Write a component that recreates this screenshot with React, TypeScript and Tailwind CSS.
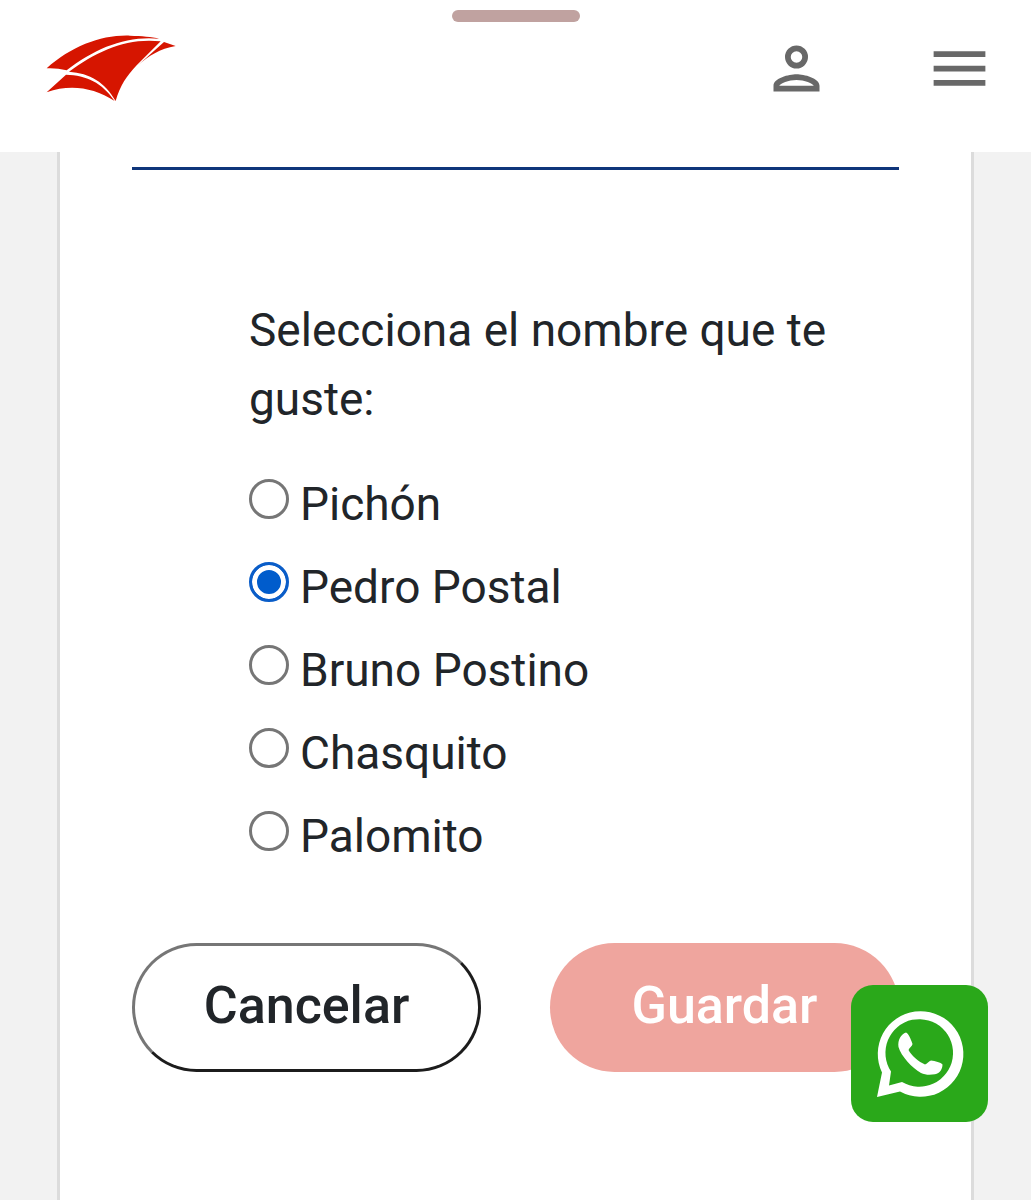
import { useState } from 'react';

const names = ['Pichón', 'Pedro Postal', 'Bruno Postino', 'Chasquito', 'Palomito'];

function Logo() {
  return (
    <svg viewBox="45 40 396 204" className="w-[132px] h-[68px]" fill="#d61500" aria-hidden="true">
      <path d="M50 143C125 76 215 42 300 45C335 46 365 48 388 54C290 44 195 82 110 149C90 144 70 142 50 143Z" />
      <path d="M117 153C200 92 290 50 392 62L320 134C290 166 270 195 257 241C225 184 180 158 117 153Z" />
      <path d="M402 64L437 76C390 84 355 106 324 134Z" />
      <path d="M108 162C170 164 215 185 254 241C190 200 120 190 50 215Z" />
    </svg>
  );
}

function WhatsAppIcon() {
  return (
    <svg viewBox="0 0 137 137" className="w-full h-full" fill="#fff" aria-hidden="true">
      <path
        fillRule="evenodd"
        d="M26 112L31 87.500A42.800 42.800 0 1 1 49 106.500ZM38 100.500L40 86.500A33.800 33.800 0 1 1 51 97Z"
      />
      <path d="M55 47.500C57 48 60 54 61.500 59C61.500 61 58 63 57.500 65C60 70 68 77 74 79.500C76 79 78 76 80 75.500C84 76 90 77.500 91.500 79.500C91.500 84 89 88.500 84 89.300C79 90 74 90 70 88C61 83 50 71 47.500 62C46.500 55 50 49 55 47.500Z" />
    </svg>
  );
}

export default function App() {
  const [selected, setSelected] = useState('Pedro Postal');

  return (
    <div className="min-h-screen flex flex-col bg-[#f2f2f2] text-[#212529] font-[Roboto,sans-serif]">
      {/* Header */}
      <header className="relative bg-white h-[152px] flex items-start justify-between pl-[45px] pr-[37px] pt-[34px]">
        <div className="absolute top-[10px] left-1/2 -translate-x-1/2 w-32 h-3 rounded-full bg-[#c0a2a0]" />
        <a href="#" aria-label="Inicio">
          <Logo />
        </a>
        <div className="flex gap-[94px]">
          <button type="button" aria-label="Mi cuenta">
            <svg viewBox="0 0 24 24" className="size-[69px]" fill="#686868">
              <path
                fillRule="evenodd"
                d="M12 4a4 4 0 1 0 0 8 4 4 0 0 0 0-8zm0 2a2 2 0 1 1 0 4 2 2 0 0 1 0-4zM12 14c-2.670 0-8 1.340-8 4v2h16v-2c0-2.660-5.330-4-8-4zm0 2c2.700 0 5.800 1.290 6 2H6c.230-.720 3.310-2 6-2z"
              />
            </svg>
          </button>
          <button type="button" aria-label="Menú">
            <svg viewBox="0 0 24 24" className="size-[69px]" fill="#686868">
              <path d="M3 6h18v2H3zM3 11h18v2H3zM3 16h18v2H3z" />
            </svg>
          </button>
        </div>
      </header>

      {/* Form */}
      <main className="grow flex flex-col mx-[57px] px-[72px] pt-[15px] pb-32 bg-white border-x-[3px] border-[#dcdcdc]">
        <hr className="border-0 h-[3px] bg-[#0f357a]" />
        <form className="mt-[126px]" onSubmit={(e) => e.preventDefault()}>
          <fieldset className="pl-[117px] pr-[60px] text-[46px] leading-[69px]">
            <legend>Selecciona el nombre que te guste:</legend>
            <div className="mt-9 flex flex-col gap-[14px]">
              {names.map((name) => (
                <label key={name} className="flex items-start gap-[11px]">
                  <input
                    type="radio"
                    name="nombre"
                    value={name}
                    checked={selected === name}
                    onChange={() => setSelected(name)}
                    className="appearance-none shrink-0 size-10 mt-[9px] rounded-full border-[3px] border-[#767676] bg-white checked:border-[#0a5dc8] checked:bg-[#005ccc] checked:shadow-[inset_0_0_0_5px_#fff]"
                  />
                  <span>{name}</span>
                </label>
              ))}
            </div>
          </fieldset>
          <div className="mt-[72px] grid grid-cols-2 gap-[69px] text-[52px] font-medium">
            <button
              type="button"
              className="h-[129px] pb-1 rounded-full border-[3px] border-t-[#767676] border-l-[#767676] border-r-[#1c1c1c] border-b-[#1c1c1c]"
            >
              Cancelar
            </button>
            <button type="submit" className="h-[129px] pb-1 rounded-full bg-[#efa59e] text-white">
              Guardar
            </button>
          </div>
        </form>
      </main>

      {/* Floating chat */}
      <a
        href="#"
        aria-label="WhatsApp"
        className="fixed right-[43px] bottom-[78px] size-[137px] rounded-[22px] bg-[#2aa81a]"
      >
        <WhatsAppIcon />
      </a>
    </div>
  );
}
